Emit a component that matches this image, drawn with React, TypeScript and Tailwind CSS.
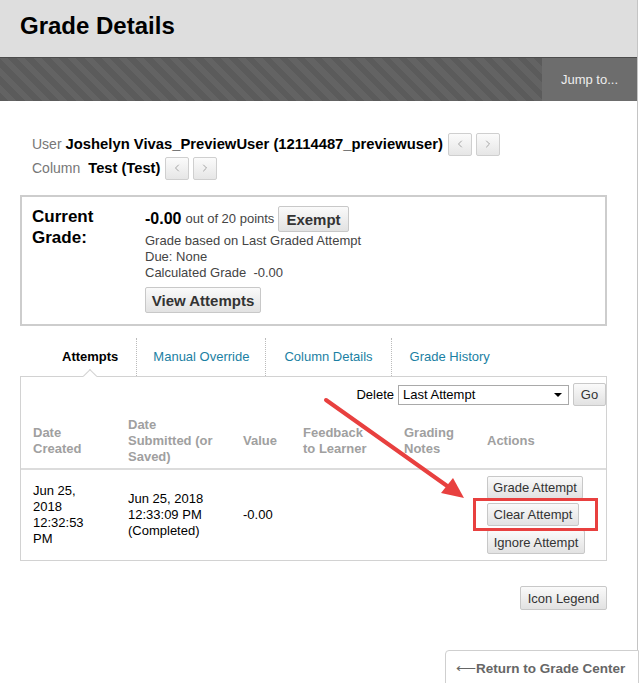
import { ChevronLeft, ChevronRight } from "lucide-react";

function NavButton({ dir }: { dir: "left" | "right" }) {
  return (
    <button className="flex h-[23px] w-[24px] items-center justify-center rounded-[2px] border border-[#cfcfcf] bg-gradient-to-b from-[#fbfbfb] to-[#e6e6e6]">
      {dir === "left" ? (
        <ChevronLeft size={12} strokeWidth={1.5} color="#888" />
      ) : (
        <ChevronRight size={12} strokeWidth={1.5} color="#888" />
      )}
    </button>
  );
}

function GrayButton({ children, className = "" }: { children: React.ReactNode; className?: string }) {
  return (
    <button
      className={
        "rounded-[2px] border border-[#c8c8c8] bg-gradient-to-b from-[#fafafa] to-[#e2e2e2] text-[13px] leading-none text-[#333] " +
        className
      }
    >
      {children}
    </button>
  );
}

export default function App() {
  return (
    <div className="relative h-[683px] w-[639px] overflow-hidden bg-white font-['Liberation_Sans',Arial,sans-serif]">
      <div className="flex min-h-full w-[638px] flex-col border-r border-[#c4c4c4]">
        {/* page title */}
        <div className="flex h-[57px] shrink-0 items-center bg-[#dedede] px-5 pb-[6px]">
          <h1 className="text-[24px] font-bold leading-none text-black">Grade Details</h1>
        </div>

        {/* striped action bar */}
        <div className="flex h-[44px] shrink-0 border-t border-[#4c4c4c] bg-[repeating-linear-gradient(45deg,#5b5b5b_0px,#5b5b5b_6px,#636363_6px,#636363_12px)]">
          <div className="ml-auto flex w-[95px] items-center justify-center bg-[#6d6d6d] text-[13px] text-[#eeeeee]">
            Jump to...
          </div>
        </div>

        <div className="flex shrink-0 flex-col pl-5 pr-[30px]">
          {/* user / column */}
          <div className="mt-[31px] flex flex-col pl-3 text-[14px]">
            <div className="flex h-[24px] items-center gap-1">
              <span className="text-[#777]">User</span>
              <span className="text-[14.8px] font-bold text-black">Joshelyn Vivas_PreviewUser (12114487_previewuser)</span>
              <div className="ml-[1px] flex gap-1">
                <NavButton dir="left" />
                <NavButton dir="right" />
              </div>
            </div>
            <div className="flex h-[24px] items-center gap-1">
              <span className="mr-1 text-[#777]">Column</span>
              <span className="text-[14.7px] font-bold text-black">Test (Test)</span>
              <div className="ml-[1px] flex gap-1">
                <NavButton dir="left" />
                <NavButton dir="right" />
              </div>
            </div>
          </div>

          {/* current grade box */}
          <div className="mt-[15px] flex h-[131px] border-2 border-[#cdcdcd] px-[10px] pt-[9px]">
            <div className="w-[113px] text-[17px] font-bold leading-[21px] text-black">
              Current
              <br />
              Grade:
            </div>
            <div className="flex flex-col text-[13px] leading-[16px] text-[#444]">
              <div className="flex items-center gap-[4px]">
                <span className="text-[16px] font-bold text-black">-0.00</span>
                <span>out of 20 points</span>
                <GrayButton className="h-[26px] px-[7px] text-[15px] font-bold">Exempt</GrayButton>
              </div>
              <span className="mt-[1px]">Grade based on Last Graded Attempt</span>
              <span>Due: None</span>
              <span>Calculated Grade&nbsp;&nbsp;-0.00</span>
              <GrayButton className="mt-[6px] h-[26px] w-[116px] text-[15px] font-bold">View Attempts</GrayButton>
            </div>
          </div>

          {/* tabs */}
          <div className="mt-[12px] flex h-[38px] pl-[24px] text-[13px]">
            <div className="flex items-center px-[18px] font-bold text-black">Attempts</div>
            <div className="flex items-center border-l border-dotted border-[#bbb] px-[16px] text-[#1b7fa3]">Manual Override</div>
            <div className="flex items-center border-l border-dotted border-[#bbb] px-[18px] text-[#1b7fa3]">Column Details</div>
            <div className="flex items-center border-l border-dotted border-[#bbb] px-[18px] text-[#1b7fa3]">Grade History</div>
          </div>

          {/* attempts panel */}
          <div className="relative border border-[#d2d2d2]">
            <div className="absolute -top-[6px] left-[64px] h-[10px] w-[10px] rotate-45 border-l border-t border-[#d2d2d2] bg-white" />
            <div className="flex items-center justify-end gap-1 pt-[6px] text-[13px] text-black">
              <span>Delete</span>
              <div className="flex h-[20px] w-[171px] items-center justify-between border border-[#a9a9a9] bg-white pl-1 pr-[6px]">
                <span>Last Attempt</span>
                <span className="h-0 w-0 border-x-[4px] border-t-[4px] border-x-transparent border-t-black" />
              </div>
              <GrayButton className="h-[23px] w-[33px] text-[13px]">Go</GrayButton>
            </div>

            <div className="grid grid-cols-[95px_115px_60px_101px_83px_1fr] items-center border-b-2 border-[#dcdcdc] pb-[3px] pl-3 pt-[11px] text-[13px] font-bold leading-[16px] text-[#a0a0a0]">
              <div>
                Date
                <br />
                Created
              </div>
              <div>
                Date
                <br />
                Submitted (or
                <br />
                Saved)
              </div>
              <div>Value</div>
              <div>
                Feedback
                <br />
                to Learner
              </div>
              <div>
                Grading
                <br />
                Notes
              </div>
              <div>Actions</div>
            </div>

            <div className="grid h-[90px] grid-cols-[95px_115px_60px_101px_83px_1fr] items-center pl-3 text-[13px] leading-[16px] text-black">
              <div>
                Jun 25,
                <br />
                2018
                <br />
                12:32:53
                <br />
                PM
              </div>
              <div>
                Jun 25, 2018
                <br />
                12:33:09 PM
                <br />
                (Completed)
              </div>
              <div>-0.00</div>
              <div />
              <div />
              <div className="flex flex-col items-start gap-[4px]">
                <GrayButton className="h-[23px] w-[96px]">Grade Attempt</GrayButton>
                <GrayButton className="h-[23px] w-[92px]">Clear Attempt</GrayButton>
                <GrayButton className="h-[24px] w-[98px]">Ignore Attempt</GrayButton>
              </div>
            </div>
          </div>

          <div className="mt-[25px] flex justify-end">
            <GrayButton className="h-[24px] w-[87px]">Icon Legend</GrayButton>
          </div>
        </div>

        <div className="mt-[40px] ml-auto -mr-[2px] flex h-[40px] w-[194px] shrink-0 items-start rounded-tl-[4px] border border-[#cfcfcf] bg-white pl-[10px] pt-[8px] text-[13.5px] font-bold text-[#666]">
          <span className="font-normal">⟵</span>Return to Grade Center
        </div>
      </div>

      {/* annotation: red arrow and highlight box */}
      <svg className="pointer-events-none absolute left-0 top-0" width="639" height="683">
        <line x1="326" y1="400" x2="450" y2="488" stroke="#e8403f" strokeWidth="4" strokeLinecap="round" />
        <polygon points="464,498 441,493 453,478" fill="#e8403f" />
        <rect x="474.5" y="499.5" width="122" height="30" fill="none" stroke="#e8403f" strokeWidth="3" />
      </svg>
    </div>
  );
}
